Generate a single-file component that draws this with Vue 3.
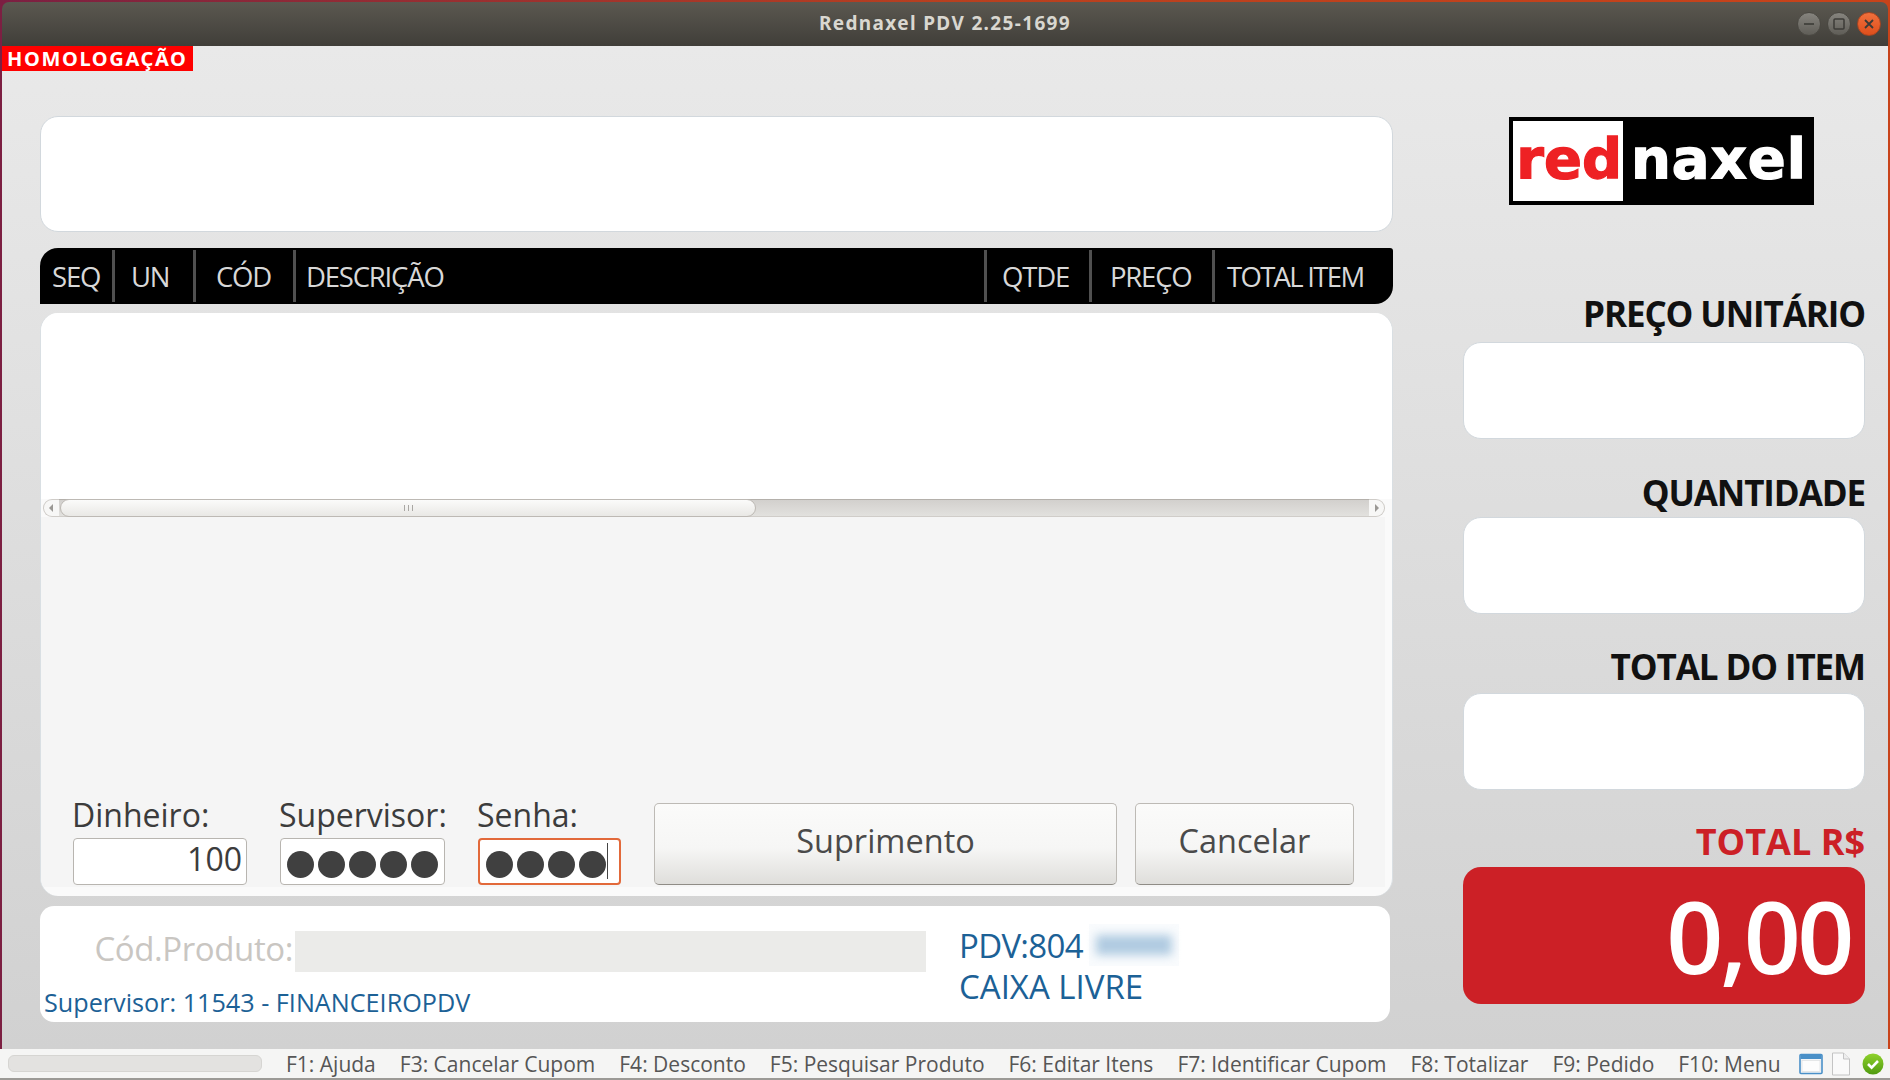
<script setup>
const columns = [
  { label: 'SEQ' },
  { label: 'UN' },
  { label: 'CÓD' },
  { label: 'DESCRIÇÃO' },
  { label: 'QTDE' },
  { label: 'PREÇO' },
  { label: 'TOTAL ITEM' }
]
const fields = [
  { label: 'PREÇO UNITÁRIO', cls: 'first' },
  { label: 'QUANTIDADE', cls: 'second' },
  { label: 'TOTAL DO ITEM', cls: 'third' }
]
const shortcuts = [
  'F1: Ajuda', 'F3: Cancelar Cupom', 'F4: Desconto', 'F5: Pesquisar Produto',
  'F6: Editar Itens', 'F7: Identificar Cupom', 'F8: Totalizar', 'F9: Pedido', 'F10: Menu'
]
</script>

<template>
  <div class="window">
    <header class="titlebar">
      <span class="title">Rednaxel PDV 2.25-1699</span>
      <div class="controls">
        <span class="ctl">
          <svg width="14" height="14" viewBox="0 0 14 14"><path d="M2 7h10" stroke="#3c3b37" stroke-width="1.6" /></svg>
        </span>
        <span class="ctl">
          <svg width="14" height="14" viewBox="0 0 14 14"><rect x="2" y="2" width="10" height="10" rx="1" fill="none" stroke="#3c3b37" stroke-width="1.5" /></svg>
        </span>
        <span class="ctl close">
          <svg width="14" height="14" viewBox="0 0 14 14"><path d="M3 3l8 8M11 3l-8 8" stroke="#3c3b37" stroke-width="1.8" /></svg>
        </span>
      </div>
    </header>

    <main class="content">
      <div class="badge">HOMOLOGAÇÃO</div>

      <section class="left">
        <div class="card top"></div>

        <div class="thead">
          <div v-for="c in columns" :key="c.label" class="th">{{ c.label }}</div>
        </div>

        <div class="table">
          <div class="rows"></div>
          <div class="scrollbar">
            <span class="arrow">
              <svg width="8" height="10" viewBox="0 0 8 10"><path d="M6 1v8L2 5z" fill="#9a9894" /></svg>
            </span>
            <div class="track">
              <div class="thumb"><span class="grip"></span></div>
            </div>
            <span class="arrow">
              <svg width="8" height="10" viewBox="0 0 8 10"><path d="M2 1v8l4-4z" fill="#9a9894" /></svg>
            </span>
          </div>
          <div class="pane">
            <div class="form">
              <div class="group g1">
                <label>Dinheiro:</label>
                <div class="input money">100</div>
              </div>
              <div class="group g2">
                <label>Supervisor:</label>
                <div class="input dots">
                  <i v-for="n in 5" :key="n"></i>
                </div>
              </div>
              <div class="group g3">
                <label>Senha:</label>
                <div class="input dots focus">
                  <i v-for="n in 4" :key="n"></i><b class="caret"></b>
                </div>
              </div>
              <button class="btn b1">Suprimento</button>
              <button class="btn b2">Cancelar</button>
            </div>
          </div>
        </div>

        <div class="info">
          <div class="info-left">
            <div class="code">
              <span class="code-label">Cód.Produto:</span>
              <div class="code-input"></div>
            </div>
            <div class="sup">Supervisor: 11543 - FINANCEIROPDV</div>
          </div>
          <div class="info-right">
            <div class="pdv"><span class="pdv-num">PDV:804</span><span class="blur"><span class="blur-ink"></span></span></div>
            <div class="pdv">CAIXA LIVRE</div>
          </div>
        </div>
      </section>

      <aside class="right">
        <div class="logo">
          <span class="red">red</span><span class="naxel">naxel</span>
        </div>
        <div v-for="f in fields" :key="f.label" class="field" :class="f.cls">
          <div class="field-label">{{ f.label }}</div>
          <div class="field-box"></div>
        </div>
        <div class="total">
          <div class="total-label">TOTAL R$</div>
          <div class="total-box">0,00</div>
        </div>
      </aside>
    </main>

    <footer class="status">
      <div class="progress"></div>
      <div class="keys">
        <span v-for="s in shortcuts" :key="s">{{ s }}</span>
      </div>
      <div class="tray">
        <svg width="24" height="22" viewBox="0 0 24 22">
          <rect x="1" y="1.5" width="22" height="19" rx="1" fill="#f4f6f8" stroke="#4a90c8" stroke-width="1.6" />
          <rect x="1.5" y="2" width="21" height="4" fill="#4a90c8" />
          <rect x="3" y="7.5" width="18" height="11" fill="#fdfdfd" stroke="#d8dadc" stroke-width=".6" />
        </svg>
        <svg class="doc" width="20" height="24" viewBox="0 0 20 24">
          <path d="M1.5 1h11l6 6v16h-17z" fill="#fafafa" stroke="#c4c4c4" stroke-width="1" />
          <path d="M12.5 1v6h6" fill="#eee" stroke="#c4c4c4" stroke-width="1" />
        </svg>
        <svg width="22" height="22" viewBox="0 0 22 22">
          <defs>
            <linearGradient id="ok" x1="0" y1="0" x2="0" y2="1">
              <stop offset="0" stop-color="#8fd22c" />
              <stop offset="1" stop-color="#4f9a10" />
            </linearGradient>
          </defs>
          <circle cx="11" cy="11" r="10.5" fill="url(#ok)" />
          <path d="M6 11l3.6 3.6L16 8" fill="none" stroke="#fff" stroke-width="2.6" />
        </svg>
      </div>
    </footer>
  </div>
</template>

<style>
html, body { margin: 0; background: #5e2750; overflow: hidden; }
</style>

<style scoped>
* { box-sizing: border-box; }
.window {
  height: 1080px;
  width: 1890px;
  display: flex;
  flex-direction: column;
  padding: 2px 2px 0 2px;
  background: linear-gradient(90deg, #7c1f42, #b8401f 50%, #c8431a);
  font-family: "Open Sans", "Noto Sans", sans-serif;
  color: #3c3c3c;
  overflow: hidden;
}
.titlebar {
  height: 44px;
  flex: none;
  position: relative;
  display: flex;
  align-items: center;
  justify-content: center;
  padding-bottom: 2px;
  background: linear-gradient(#5b5850, #403e39);
  border-radius: 7px 7px 0 0;
}
.title {
  font-family: "Noto Sans", "Open Sans", sans-serif;
  font-weight: 700;
  font-size: 19px;
  letter-spacing: 1.35px;
  color: #d9d7d0;
}
.controls {
  position: absolute;
  right: 7px;
  top: 10px;
  display: flex;
  gap: 6px;
}
.ctl {
  width: 24px;
  height: 24px;
  border-radius: 50%;
  background: linear-gradient(#86847e, #5f5d57);
  border: 1px solid #4a4842;
  display: flex;
  align-items: center;
  justify-content: center;
}
.ctl.close { background: linear-gradient(#f0703c, #dd4f1c); border-color: #a84420; }
.content {
  flex: 1;
  min-height: 0;
  position: relative;
  display: flex;
  padding: 70px 0 0 38px;
  background: linear-gradient(#e9e9e9, #d1d1d1);
}
.badge {
  position: absolute;
  left: 0;
  top: 0;
  width: 191px;
  height: 25px;
  background: #ff0000;
  color: #fff;
  font-family: "Noto Sans", sans-serif;
  font-weight: 700;
  font-size: 20px;
  line-height: 25px;
  letter-spacing: 1.65px;
  padding-left: 5px;
  white-space: nowrap;
}
.left {
  width: 1353px;
  display: flex;
  flex-direction: column;
  flex: none;
}
.card {
  background: #fff;
  border: 1px solid #d2d8dd;
  border-radius: 18px;
}
.top { height: 116px; }
.thead {
  margin-top: 16px;
  height: 56px;
  background: #000;
  border-radius: 18px 3px 18px 0;
  display: grid;
  grid-template-columns: 72px 81px 100px 691px 105px 123px 181px;
  padding: 2px 0;
}
.th {
  color: #d8d8d8;
  font-size: 27.5px;
  letter-spacing: -1.2px;
  display: flex;
  align-items: center;
  border-left: 3px solid #505050;
  white-space: nowrap;
}
.th:nth-child(1) { border-left: 0; padding-left: 12px; }
.th:nth-child(2) { padding-left: 16px; }
.th:nth-child(3) { padding-left: 20px; }
.th:nth-child(4) { padding-left: 10px; }
.th:nth-child(5) { padding-left: 15px; }
.th:nth-child(6) { padding-left: 18px; }
.th:nth-child(7) { padding-left: 12px; letter-spacing: -1.7px; }
.table {
  margin-top: 9px;
  height: 583px;
  background: #fafafa;
  border-radius: 18px;
  display: flex;
  flex-direction: column;
  overflow: hidden;
  border-left: 1px solid #d9dfe3;
  border-right: 1px solid #d9dfe3;
}
.rows { height: 186px; background: #fff; }
.scrollbar {
  height: 18px;
  margin: 0 7px 0 2px;
  display: flex;
  align-items: center;
  background: #f7f7f6;
  border-radius: 9px;
  box-shadow: inset 0 0 0 1px #cfccc8;
  flex: none;
}
.arrow {
  width: 16px;
  height: 18px;
  display: flex;
  align-items: center;
  justify-content: center;
  flex: none;
}
.track {
  flex: 1;
  height: 18px;
  background: linear-gradient(#d2d0cd, #e2e1de);
  border-top: 1px solid #b4b0ab;
  border-bottom: 1px solid #d0cdc9;
}
.thumb {
  width: 696px;
  height: 18px;
  margin-top: -1px;
  margin-left: 1px;
  background: linear-gradient(#fbfbfa, #e9e8e5);
  border: 1.5px solid #bdb9b4;
  border-radius: 9px;
  display: flex;
  align-items: center;
  justify-content: center;
}
.grip {
  width: 9px;
  height: 6px;
  background: repeating-linear-gradient(90deg, #a9a7a3 0 1px, transparent 1px 4px);
}
.pane {
  flex: 1;
  display: flex;
  flex-direction: column;
  justify-content: flex-end;
  background: #f5f5f5;
  margin: 0 7px 9px 0;
}
.form {
  display: flex;
  align-items: flex-end;
  padding: 0 0 2px 32px;
}
.group { display: flex; flex-direction: column; }
.group label {
  font-size: 32px;
  line-height: 38px;
  color: #3c3c3c;
  margin-bottom: 4px;
  margin-left: -1px;
  white-space: nowrap;
}
.g1 { width: 174px; }
.g2 { width: 165px; margin-left: 33px; }
.g3 { width: 143px; margin-left: 33px; }
.input {
  height: 47px;
  background: #fff;
  border: 1.5px solid #b8b5b0;
  border-radius: 4px;
  display: flex;
  align-items: center;
}
.money {
  justify-content: flex-end;
  padding: 0 4px 6px 0;
  font-size: 32px;
}
.dots {
  gap: 4px;
  padding: 5px 0 0 6px;
}
.dots i {
  width: 27px;
  height: 27px;
  border-radius: 50%;
  background: #404040;
}
.focus { border: 2px solid #e2693a; }
.caret {
  width: 1px;
  height: 36px;
  background: #444;
  margin: -6px 0 0 -3px;
}
.btn {
  height: 82px;
  font-family: inherit;
  font-size: 32.5px;
  color: #4a4a4a;
  background: linear-gradient(#fbfbfa 0%, #f6f6f5 55%, #dfdedb 100%);
  border: 1.5px solid #bdbab5;
  border-bottom-color: #8f8c86;
  border-radius: 5px;
  padding: 0 0 8px;
}
.b1 { width: 463px; margin-left: 33px; }
.b2 { width: 219px; margin-left: 18px; }
.info {
  margin-top: 10px;
  height: 116px;
  width: 1350px;
  background: #fff;
  border-radius: 14px;
  display: flex;
  color: #1c6196;
}
.info-left {
  width: 919px;
  flex: none;
  padding-top: 25px;
}
.code { display: flex; align-items: center; height: 41px; }
.code-label {
  width: 255px;
  text-align: right;
  font-size: 33px;
  letter-spacing: -0.4px;
  color: #c9c6c2;
  padding: 0 2px 6px 0;
  flex: none;
  white-space: nowrap;
}
.code-input { width: 631px; height: 41px; background: #ebebe9; }
.sup { font-size: 25.2px; margin: 13px 0 0 4px; white-space: nowrap; }
.info-right { padding-top: 18px; }
.pdv { font-size: 33px; line-height: 41px; white-space: nowrap; display: flex; align-items: center; }
.pdv-num { letter-spacing: -0.7px; }
.blur {
  margin-left: 6px;
  width: 90px;
  height: 42px;
  background: #f9fbfd;
  display: flex;
  align-items: center;
  justify-content: center;
}
.blur-ink {
  width: 76px;
  height: 20px;
  background: #b0cbe1;
  filter: blur(5px);
}
.right {
  width: 402px;
  margin-left: 70px;
  flex: none;
  display: flex;
  flex-direction: column;
  align-items: stretch;
}
.logo {
  width: 305px;
  height: 88px;
  margin: 1px 0 0 46px;
  background: #000;
  border: 4px solid #000;
  display: flex;
  align-items: center;
  font-family: "DejaVu Sans", sans-serif;
  font-weight: 700;
  font-size: 56px;
  -webkit-text-stroke: 1.3px currentColor;
  flex: none;
}
.red {
  width: 110px;
  height: 80px;
  background: #fff;
  color: #ee2124;
  display: flex;
  align-items: center;
  justify-content: flex-end;
  padding: 0 1px 6px 0;
  flex: none;
}
.naxel {
  color: #fff;
  padding: 0 0 6px 8px;
  letter-spacing: 1px;
}
.field { display: flex; flex-direction: column; }
.field-label {
  text-align: right;
  font-size: 35px;
  line-height: 44px;
  font-weight: 700;
  letter-spacing: -1.1px;
  color: #111;
  height: 44px;
  white-space: nowrap;
}
.field-box {
  height: 97px;
  background: #fff;
  border: 1px solid #d2d8dd;
  border-radius: 18px;
}
.first { margin-top: 87px; }
.first .field-box { margin-top: 6px; }
.second { margin-top: 32px; }
.second .field-box { margin-top: 2px; }
.third { margin-top: 31px; }
.third .field-box { margin-top: 4px; }
.total { display: flex; flex-direction: column; margin-top: 30px; }
.total-label {
  text-align: right;
  color: #cc2026;
  font-size: 36px;
  line-height: 44px;
  font-weight: 700;
}
.total-box {
  height: 137px;
  margin-top: 3px;
  background: #cc2026;
  border-radius: 18px;
  color: #fff;
  text-align: right;
  font-size: 100px;
  font-weight: 600;
  letter-spacing: -3.5px;
  line-height: 137px;
  padding-right: 14px;
}
.status {
  height: 31px;
  flex: none;
  margin: 0 -2px;
  padding-left: 8px;
  display: flex;
  align-items: center;
  background: #f5f5f4;
  border-bottom: 2px solid #9c9a96;
  font-size: 21px;
  color: #565656;
}
.progress {
  width: 254px;
  height: 17px;
  background: #e3e2e0;
  border: 1px solid #d6d5d2;
  border-radius: 6px;
  flex: none;
}
.keys {
  display: flex;
  gap: 24px;
  margin-left: 24px;
  white-space: nowrap;
}
.tray {
  margin-left: auto;
  padding-right: 6px;
  display: flex;
  align-items: center;
  gap: 8px;
}
.doc { margin-right: 3px; }
</style>
